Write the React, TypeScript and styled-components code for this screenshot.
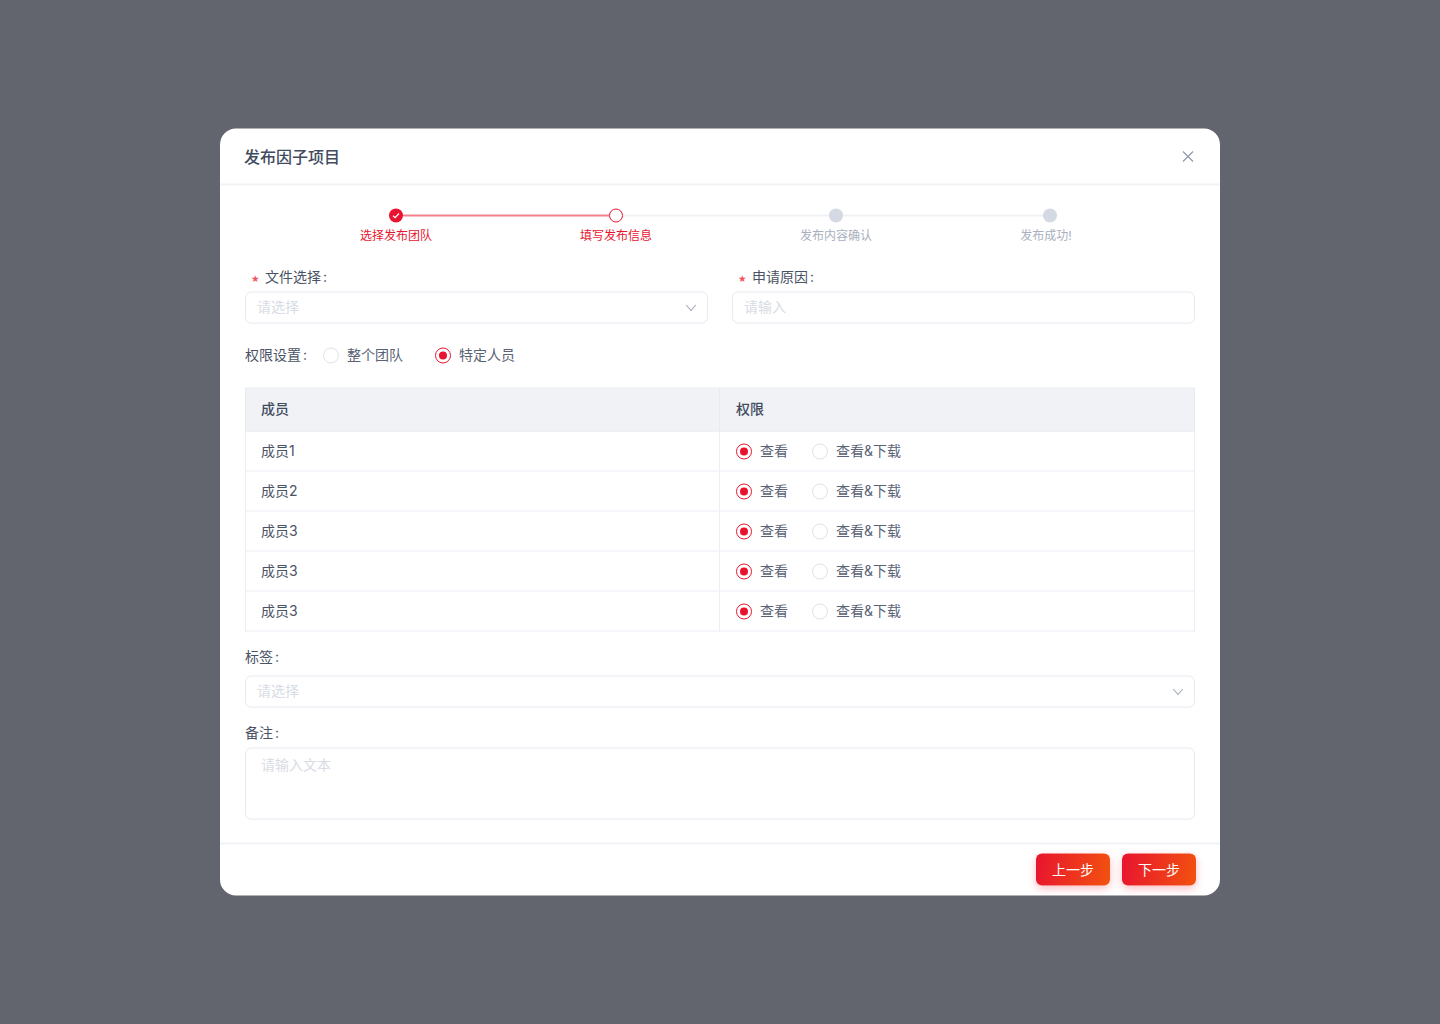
import React from 'react'
import styled, { createGlobalStyle } from 'styled-components'

const GlobalStyle = createGlobalStyle`
  html, body {
    margin: 0;
    padding: 0;
    background: #62656d;
  }
  body {
    font-family: Inter, "Noto Sans CJK SC", "Noto Sans", sans-serif;
    color: #4a5365;
    font-size: 14px;
  }
`

const Page = styled.div`
  width: 1440px;
  height: 1024px;
  box-sizing: border-box;
  padding-top: 128px;
  display: flex;
  justify-content: center;
  align-items: flex-start;
  background: #62656d;
  overflow: hidden;
`

const Modal = styled.div`
  width: 1000px;
  height: 767px;
  display: flex;
  flex-direction: column;
  background: #fff;
  border-radius: 16px;
  transform: translateY(0.5px);
`

const Header = styled.header`
  height: 57px;
  box-sizing: border-box;
  padding: 0 25px 0 24px;
  display: flex;
  align-items: center;
  justify-content: space-between;
  border-bottom: 2px solid #f0f2f6;
`

const Title = styled.h1`
  margin: 0;
  font-size: 16px;
  font-weight: 500;
  line-height: 24px;
  color: #414b5e;
`

const CloseButton = styled.button`
  width: 14px;
  height: 14px;
  padding: 0;
  border: 0;
  background: none;
  display: flex;
  color: #8e96a8;
`

const Content = styled.div`
  flex: 1;
  padding: 23px 25px 0;
`

const StepTrack = styled.div`
  display: flex;
  align-items: center;
  margin-left: 144px;
`

const StepDot = styled.span<{ $state: 'done' | 'current' | 'todo' }>`
  flex: none;
  width: 14px;
  height: 14px;
  box-sizing: border-box;
  border-radius: 50%;
  display: flex;
  align-items: center;
  justify-content: center;
  color: #fff;
  background: ${p => (p.$state === 'done' ? '#e8142f' : p.$state === 'current' ? '#fff' : '#d5d9e3')};
  border: ${p => (p.$state === 'current' ? '1.5px solid #e8142f' : '0')};
`

const StepLine = styled.span<{ $active?: boolean; $width: number }>`
  flex: none;
  width: ${p => p.$width}px;
  height: 2px;
  background: ${p => (p.$active ? '#f4808e' : '#f0f2f6')};
`

const StepLabels = styled.div`
  display: grid;
  grid-template-columns: repeat(4, 220px);
  margin: 3px 0 0 41px;
`

const StepLabel = styled.span<{ $active?: boolean }>`
  font-size: 12px;
  line-height: 20px;
  text-align: center;
  color: ${p => (p.$active ? '#e8142f' : '#a9afbe')};

  &:last-child {
    padding-right: 20px;
  }
`

const TwoColumns = styled.div`
  display: grid;
  grid-template-columns: 463px 463px;
  column-gap: 24px;
  margin-top: 22px;
`

const Field = styled.div`
  display: flex;
  flex-direction: column;
`

const FieldLabel = styled.label<{ $required?: boolean; $gap?: number }>`
  display: flex;
  align-items: center;
  height: 20px;
  margin-bottom: ${p => p.$gap ?? 4}px;
  padding: 0 0 2px ${p => (p.$required ? '6px' : '0')};
  box-sizing: border-box;
  line-height: 18px;
  color: #4a5365;
`

const Star = styled.span`
  width: 14px;
  padding-top: 3px;
  color: #f4525f;
  font-size: 9.5px;
  font-family: "DejaVu Sans", sans-serif;
`

const Colon = styled.span`
  margin-left: 2px;
`

const SelectBox = styled.div`
  height: 32px;
  box-sizing: border-box;
  padding: 0 12px 2px 11px;
  display: flex;
  align-items: center;
  justify-content: space-between;
  background: #fff;
  border: 1.5px solid #e7eaf0;
  border-radius: 6px;
`

const Placeholder = styled.span`
  color: #d8dce4;
  font-size: 14px;
  line-height: 20px;
`

const Chevron = styled.svg`
  width: 12px;
  height: 12px;
  margin: 2px -2px 0 0;
  color: #a0a7b8;
`

const RadioRow = styled.div`
  display: flex;
  align-items: center;
  height: 20px;
  margin-top: 22px;
`

const RadioTitle = styled.span`
  width: 78px;
  line-height: 18px;
  padding-bottom: 2px;
`

const OptionText = styled.span`
  line-height: 18px;
  padding-bottom: 2px;
`

const RadioOption = styled.label<{ $width: number }>`
  display: flex;
  align-items: center;
  gap: 8px;
  width: ${p => p.$width}px;
  color: #5a6375;
`

const RadioMark = styled.span<{ $checked?: boolean }>`
  flex: none;
  width: 16px;
  height: 16px;
  box-sizing: border-box;
  border-radius: 50%;
  display: flex;
  align-items: center;
  justify-content: center;
  border: 1px solid ${p => (p.$checked ? '#e8142f' : '#dfe2ea')};
  background: #fff;

  &::after {
    content: '';
    display: ${p => (p.$checked ? 'block' : 'none')};
    width: 8px;
    height: 8px;
    border-radius: 50%;
    background: #e8142f;
  }
`

const MemberTable = styled.table`
  width: 950px;
  margin-top: 22px;
  border-collapse: collapse;
  table-layout: fixed;

  th:first-child {
    width: 474px;
  }
  th:first-child,
  td:first-child {
    padding-left: 15px;
  }
`

const HeadCell = styled.th`
  height: 43px;
  box-sizing: border-box;
  padding: 0 16px 2px;
  text-align: left;
  font-size: 14px;
  font-weight: 500;
  line-height: 18px;
  color: #414b5e;
  background: #f0f2f5;
  border: 1px solid #e8ebf0;
`

const Cell = styled.td`
  height: 40px;
  box-sizing: border-box;
  padding: 0 16px;
  line-height: 20px;
  color: #4a5365;
  border: 1px solid #eceef3;
`

const MemberName = styled.span`
  display: block;
  line-height: 18px;
  padding-bottom: 2px;
`

const PermissionGroup = styled.div`
  display: flex;
  align-items: center;
`

const TagsField = styled(Field)`
  margin-top: 16px;
`

const NotesField = styled(Field)`
  margin-top: 16px;
`

const TextBox = styled.div`
  height: 72px;
  box-sizing: border-box;
  padding: 6px 15px;
  border: 1.5px solid #e7eaf0;
  border-radius: 6px;
`

const Footer = styled.footer`
  height: 53px;
  box-sizing: border-box;
  padding: 9px 24px 0 0;
  display: flex;
  justify-content: flex-end;
  gap: 12px;
  border-top: 2px solid #f0f2f6;
`

const StepButton = styled.button`
  width: 74px;
  height: 32px;
  padding: 0;
  border: 0;
  border-radius: 6px;
  font-family: inherit;
  font-size: 14px;
  line-height: 20px;
  color: #fff;
  background: linear-gradient(100deg, #e8142f 0%, #f2520f 100%);
  box-shadow: 0 3px 8px rgba(232, 20, 47, 0.28);
`

const steps = ['选择发布团队', '填写发布信息', '发布内容确认', '发布成功!']
const members = ['成员1', '成员2', '成员3', '成员3', '成员3']

const ChevronIcon = () => (
  <Chevron viewBox="0 0 12 12" fill="none" stroke="currentColor" strokeWidth="1.1">
    <path d="M1.2 3.5 6 9l4.8-5.5" />
  </Chevron>
)

const App = () => {
  return (
    <Page>
      <GlobalStyle />
      <Modal>
        <Header>
          <Title>发布因子项目</Title>
          <CloseButton aria-label="关闭">
            <svg width="14" height="14" viewBox="0 0 14 14" fill="none" stroke="currentColor" strokeWidth="1.1">
              <path d="M2 2l10 10M12 2 2 12" />
            </svg>
          </CloseButton>
        </Header>

        <Content>
          <StepTrack>
            <StepDot $state="done">
              <svg width="8" height="8" viewBox="0 0 8 8" fill="none" stroke="currentColor" strokeWidth="1.2">
                <path d="M1 4.2 3.1 6.2 7 2" />
              </svg>
            </StepDot>
            <StepLine $active $width={206} />
            <StepDot $state="current" />
            <StepLine $width={206} />
            <StepDot $state="todo" />
            <StepLine $width={200} />
            <StepDot $state="todo" />
          </StepTrack>
          <StepLabels>
            {steps.map((step, i) => (
              <StepLabel key={step} $active={i < 2}>{step}</StepLabel>
            ))}
          </StepLabels>

          <TwoColumns>
            <Field>
              <FieldLabel $required><Star>★</Star>文件选择<Colon>:</Colon></FieldLabel>
              <SelectBox>
                <Placeholder>请选择</Placeholder>
                <ChevronIcon />
              </SelectBox>
            </Field>
            <Field>
              <FieldLabel $required><Star>★</Star>申请原因<Colon>:</Colon></FieldLabel>
              <SelectBox>
                <Placeholder>请输入</Placeholder>
              </SelectBox>
            </Field>
          </TwoColumns>

          <RadioRow>
            <RadioTitle>权限设置<Colon>:</Colon></RadioTitle>
            <RadioOption $width={112}><RadioMark /><OptionText>整个团队</OptionText></RadioOption>
            <RadioOption $width={112}><RadioMark $checked /><OptionText>特定人员</OptionText></RadioOption>
          </RadioRow>

          <MemberTable>
            <thead>
              <tr>
                <HeadCell>成员</HeadCell>
                <HeadCell>权限</HeadCell>
              </tr>
            </thead>
            <tbody>
              {members.map((member, i) => (
                <tr key={i}>
                  <Cell><MemberName>{member}</MemberName></Cell>
                  <Cell>
                    <PermissionGroup>
                      <RadioOption $width={76}><RadioMark $checked /><OptionText>查看</OptionText></RadioOption>
                      <RadioOption $width={110}><RadioMark /><OptionText>查看&amp;下载</OptionText></RadioOption>
                    </PermissionGroup>
                  </Cell>
                </tr>
              ))}
            </tbody>
          </MemberTable>

          <TagsField>
            <FieldLabel $gap={8}>标签<Colon>:</Colon></FieldLabel>
            <SelectBox>
              <Placeholder>请选择</Placeholder>
              <ChevronIcon />
            </SelectBox>
          </TagsField>

          <NotesField>
            <FieldLabel>备注<Colon>:</Colon></FieldLabel>
            <TextBox>
              <Placeholder>请输入文本</Placeholder>
            </TextBox>
          </NotesField>
        </Content>

        <Footer>
          <StepButton>上一步</StepButton>
          <StepButton>下一步</StepButton>
        </Footer>
      </Modal>
    </Page>
  )
}

export default App
